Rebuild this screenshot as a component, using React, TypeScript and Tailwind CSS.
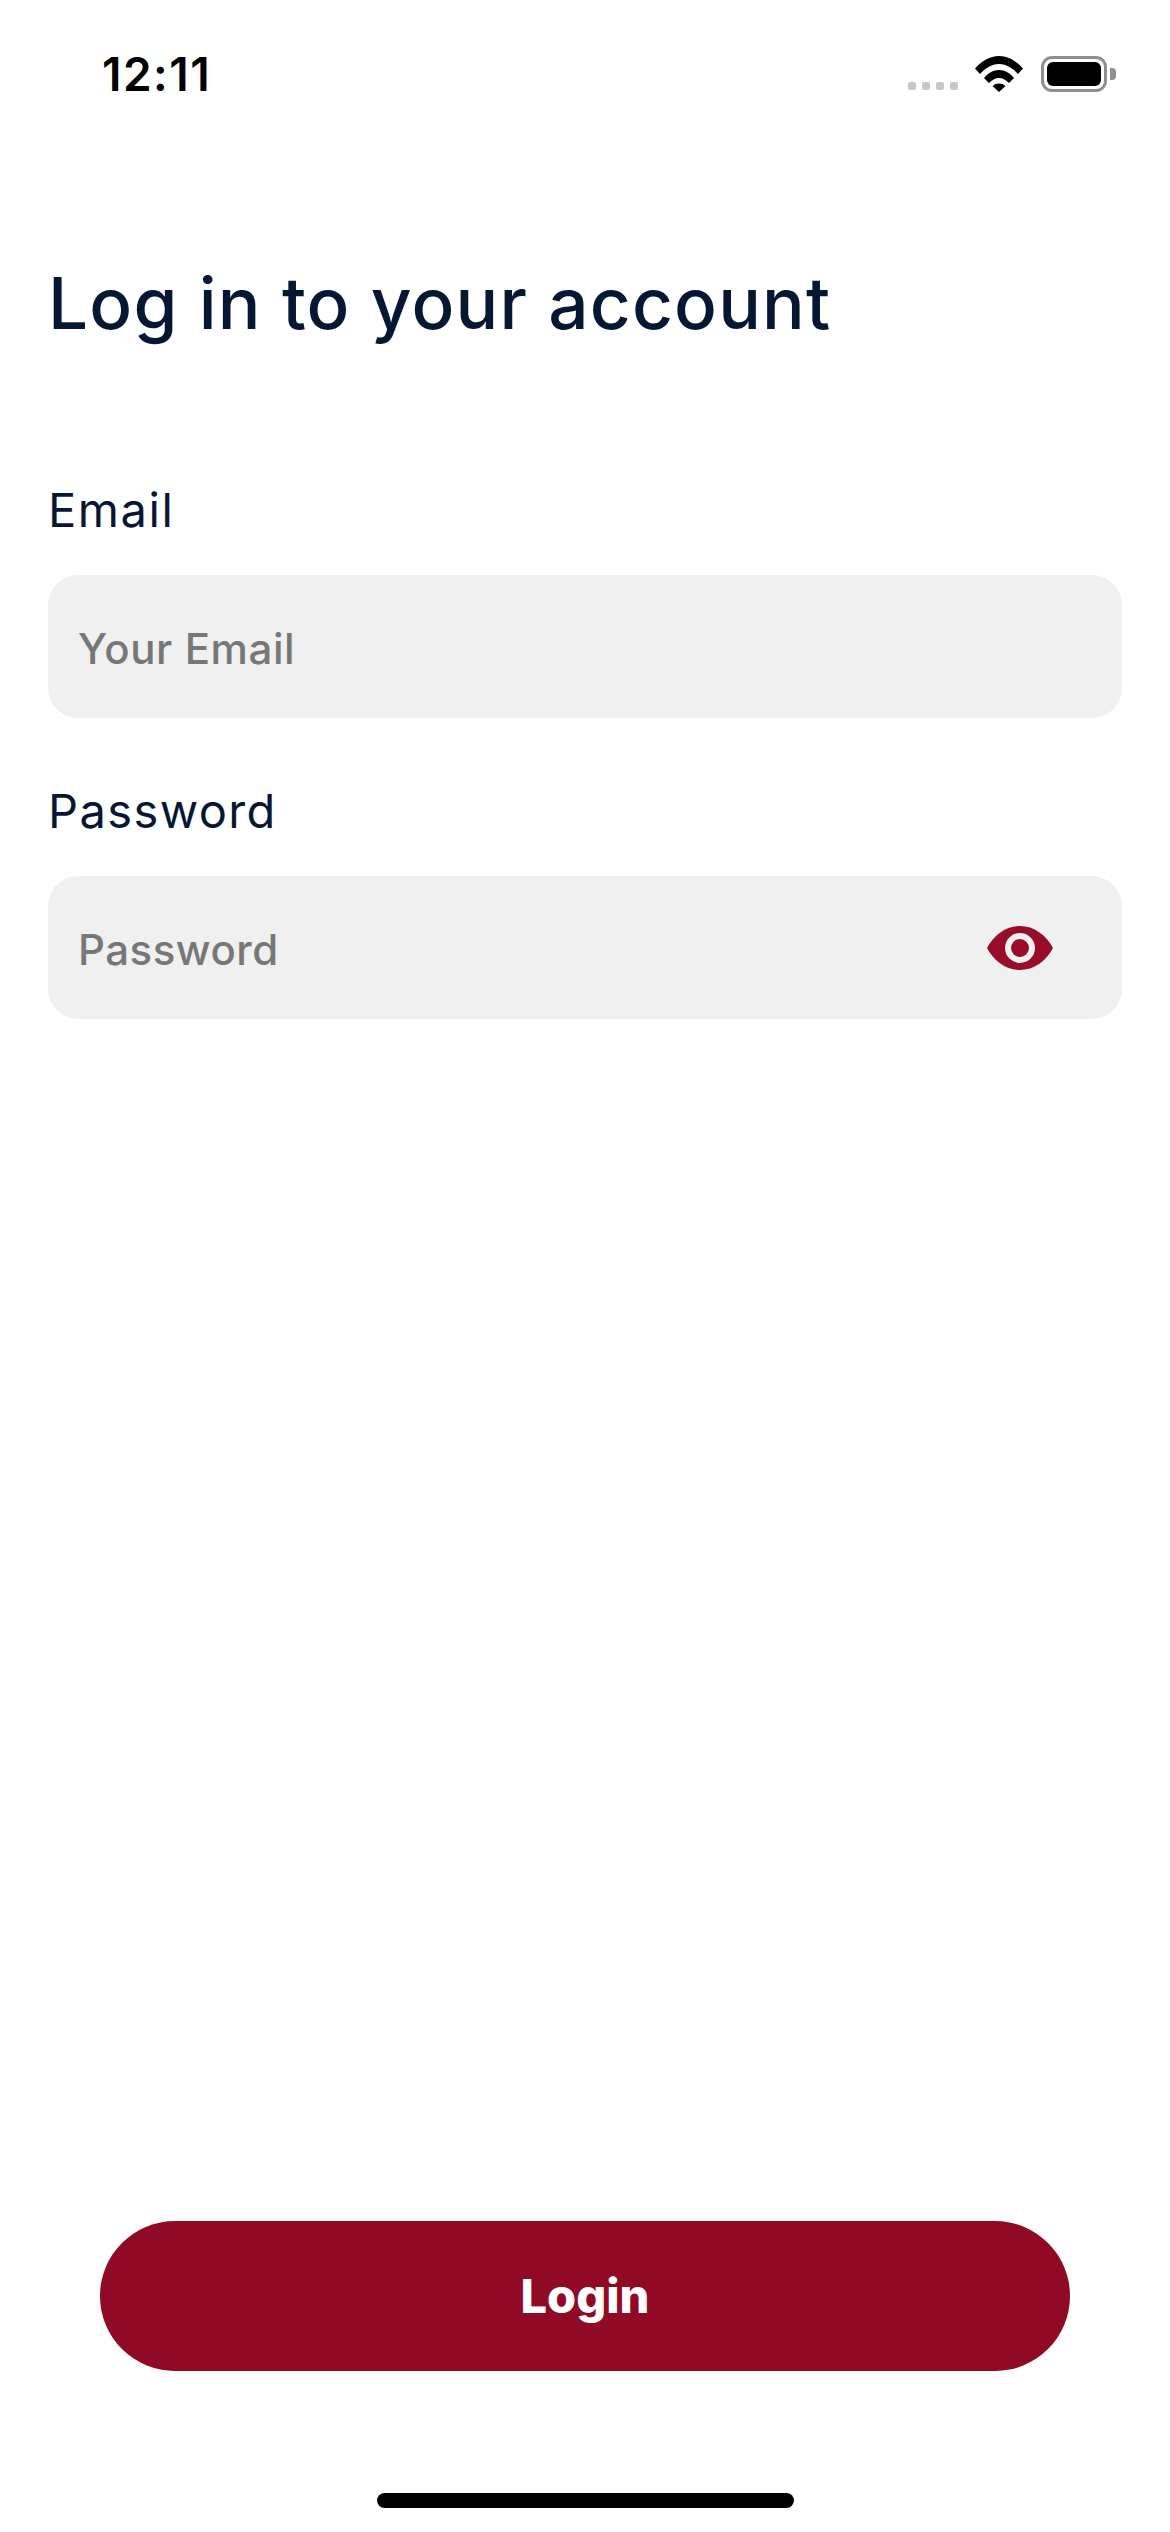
export default function App() {
  return (
    <div className="w-[1170px] h-[2532px] bg-white flex flex-col overflow-hidden [font-family:Inter,sans-serif]">
      <div className="h-[150px] shrink-0 flex items-start justify-between pl-[102px] pr-[54px] pt-[46px]">
        <span className="font-semibold text-[46px] leading-[56px] text-black tracking-[1.5px]">12:11</span>
        <div className="flex items-start pt-[10px]">
          <div className="flex gap-[6px] mt-[26px] mr-[17px]">
            <div className="w-[8px] h-[8px] rounded-[2px] bg-[#c8c8c8]" />
            <div className="w-[8px] h-[8px] rounded-[2px] bg-[#c8c8c8]" />
            <div className="w-[8px] h-[8px] rounded-[2px] bg-[#c8c8c8]" />
            <div className="w-[8px] h-[8px] rounded-[2px] bg-[#c8c8c8]" />
          </div>
          <svg width="48" height="36" viewBox="0 0 48 36" className="mr-[18px]">
            <path d="M0 12.500C6.500 5 15 0 24 0S41.500 5 48 12.500L43 18C38 12.500 31.500 8 24 8S10 12.500 5 18Z" fill="#000" />
            <path d="M9 22C13 17 18 14 24 14S35 17 39 22L34 27C31 24 28 22 24 22S17 24 14 27Z" fill="#000" />
            <path d="M17.500 30C19.500 28.300 21.500 27.500 24 27.500S28.500 28.300 30.500 30L24 36Z" fill="#000" />
          </svg>
          <div className="w-[66px] h-[36px] rounded-[11px] border-[3px] border-[#8f8f8f] p-[3px] mr-[3px]">
            <div className="w-full h-full rounded-[6px] bg-black" />
          </div>
          <div className="w-[6px] h-[12px] mt-[12px] rounded-r-[4px] bg-[#8f8f8f]" />
        </div>
      </div>

      <div className="px-[48px] flex flex-col">
        <h1 className="text-[#061733] text-[71px] leading-[106px] font-medium mt-[100px] tracking-[1.2px]">Log in to your account</h1>

        <label className="text-[#061733] text-[47px] leading-[60px] mt-[124px] tracking-[1.6px]">Email</label>
        <div className="h-[143px] mt-[35px] rounded-[30px] bg-[#f0f0f0] flex items-center pl-[30px]">
          <span className="text-[#777777] font-medium text-[42px] leading-[54px] mt-[5px] tracking-[0.6px]">Your Email</span>
        </div>

        <label className="text-[#061733] text-[47px] leading-[60px] mt-[63px] tracking-[1.4px]">Password</label>
        <div className="h-[143px] mt-[35px] rounded-[30px] bg-[#f0f0f0] flex items-center justify-between pl-[30px] pr-[69px]">
          <span className="text-[#777777] font-medium text-[42px] leading-[54px] mt-[5px] tracking-[0.5px]">Password</span>
          <svg width="66" height="44" viewBox="0 0 66 44" className="mt-[1px]">
            <path fillRule="evenodd" d="M0 22C7 9 19 0 33 0S59 9 66 22C59 35 47 44 33 44S7 35 0 22ZM33 7A15 15 0 1 0 33 37A15 15 0 1 0 33 7Z" fill="#9a0d2a" />
            <circle cx="33" cy="22" r="9" fill="#9a0d2a" />
          </svg>
        </div>
      </div>

      <div className="mt-auto flex flex-col items-center">
        <button className="w-[970px] h-[150px] rounded-[75px] bg-[#910a25] text-white text-[47px] font-extrabold flex items-center justify-center">Login</button>
        <div className="w-[417px] h-[15px] rounded-full bg-black mt-[122px] mb-[24px]" />
      </div>
    </div>
  );
}
